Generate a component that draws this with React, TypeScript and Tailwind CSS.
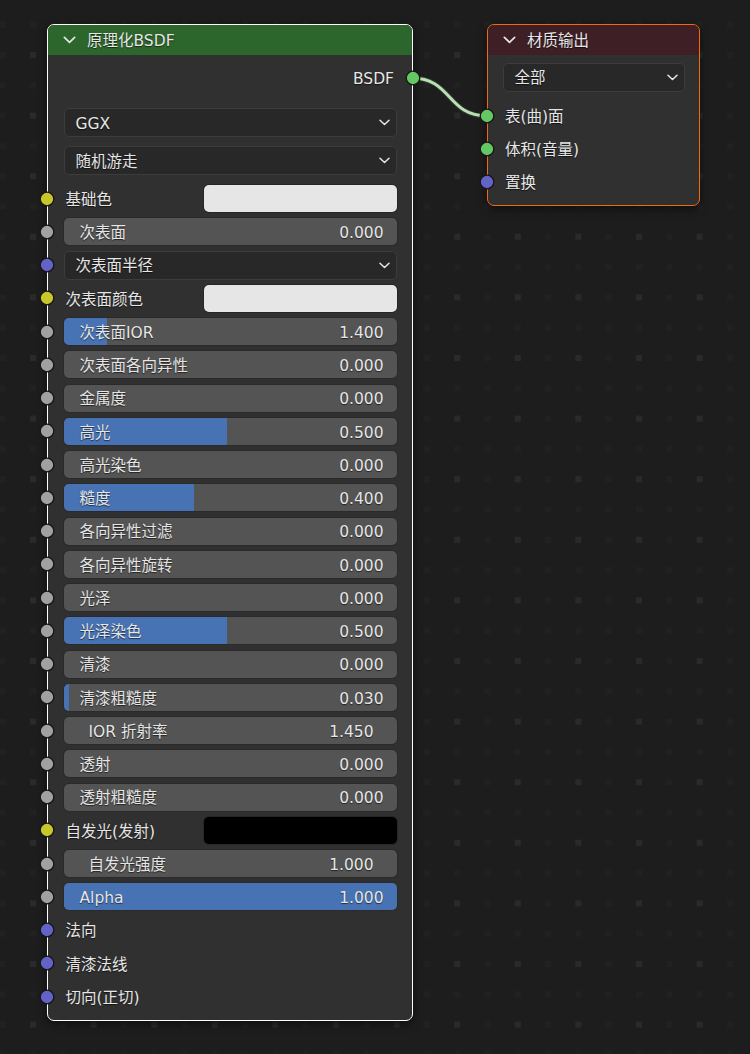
import React from "react";

type Row =
  | { kind: "color"; label: string; socket: string; swatch: string }
  | { kind: "slider"; label: string; socket: string; value: string; fill: string; inset?: boolean }
  | { kind: "menu"; label: string; socket: string }
  | { kind: "label"; label: string; socket: string };

const YELLOW = "#c7c729";
const GRAY = "#a1a1a1";
const PURPLE = "#6363c7";
const GREEN = "#63c763";

const rows: Row[] = [
  { kind: "color", label: "基础色", socket: YELLOW, swatch: "bg-[#e6e6e6]" },
  { kind: "slider", label: "次表面", socket: GRAY, value: "0.000", fill: "w-0" },
  { kind: "menu", label: "次表面半径", socket: PURPLE },
  { kind: "color", label: "次表面颜色", socket: YELLOW, swatch: "bg-[#e6e6e6]" },
  { kind: "slider", label: "次表面IOR", socket: GRAY, value: "1.400", fill: "w-[43px]" },
  { kind: "slider", label: "次表面各向异性", socket: GRAY, value: "0.000", fill: "w-0" },
  { kind: "slider", label: "金属度", socket: GRAY, value: "0.000", fill: "w-0" },
  { kind: "slider", label: "高光", socket: GRAY, value: "0.500", fill: "w-[163px]" },
  { kind: "slider", label: "高光染色", socket: GRAY, value: "0.000", fill: "w-0" },
  { kind: "slider", label: "糙度", socket: GRAY, value: "0.400", fill: "w-[130px]" },
  { kind: "slider", label: "各向异性过滤", socket: GRAY, value: "0.000", fill: "w-0" },
  { kind: "slider", label: "各向异性旋转", socket: GRAY, value: "0.000", fill: "w-0" },
  { kind: "slider", label: "光泽", socket: GRAY, value: "0.000", fill: "w-0" },
  { kind: "slider", label: "光泽染色", socket: GRAY, value: "0.500", fill: "w-[163px]" },
  { kind: "slider", label: "清漆", socket: GRAY, value: "0.000", fill: "w-0" },
  { kind: "slider", label: "清漆粗糙度", socket: GRAY, value: "0.030", fill: "w-[5px]" },
  { kind: "slider", label: "IOR 折射率", socket: GRAY, value: "1.450", fill: "w-0", inset: true },
  { kind: "slider", label: "透射", socket: GRAY, value: "0.000", fill: "w-0" },
  { kind: "slider", label: "透射粗糙度", socket: GRAY, value: "0.000", fill: "w-0" },
  { kind: "color", label: "自发光(发射)", socket: YELLOW, swatch: "bg-black" },
  { kind: "slider", label: "自发光强度", socket: GRAY, value: "1.000", fill: "w-0", inset: true },
  { kind: "slider", label: "Alpha", socket: GRAY, value: "1.000", fill: "w-full" },
  { kind: "label", label: "法向", socket: PURPLE },
  { kind: "label", label: "清漆法线", socket: PURPLE },
  { kind: "label", label: "切向(正切)", socket: PURPLE },
];

const font = "font-['DejaVu_Sans','Noto_Sans_CJK_SC',sans-serif]";
const txt =
  "pt-[4px] text-[15.5px] text-[#e6e6e6] [text-shadow:0_1px_1px_rgba(0,0,0,0.6)] leading-none";

// sockets sit on the node border, half outside the node
const Socket = ({ color, side = "left" }: { color: string; side?: "left" | "right" }) => (
  <svg
    width="16"
    height="16"
    viewBox="0 0 16 16"
    className={`absolute top-[calc(50%-8px)] ${side === "left" ? "left-[-9px]" : "right-[-9px]"}`}
  >
    <circle cx="8" cy="8" r="6.8" fill={color} stroke="#161616" strokeWidth="1.3" />
  </svg>
);

const Chevron = ({ className }: { className?: string }) => (
  <svg width="11" height="7" viewBox="0 0 11 7" className={className}>
    <path d="M1 1.2 L5.5 5.5 L10 1.2" fill="none" stroke="#e6e6e6" strokeWidth="1.5" strokeLinecap="round" strokeLinejoin="round" />
  </svg>
);

const Dropdown = ({ label }: { label: string }) => (
  <div className="w-full h-[29px] flex items-center justify-between rounded-[5px] bg-[#282828] border border-[#3c3c3c] pl-[11px] pr-[6px]">
    <span className={txt}>{label}</span>
    <Chevron />
  </div>
);

const BsdfRow = ({ row }: { row: Row }) => {
  return (
    <div className="relative h-[33.25px] flex items-center px-[15.5px]">
      <Socket color={row.socket} />
      {row.kind === "color" && (
        <div className="flex items-center w-full">
          <span className={`${txt} pl-[2px] w-[140px]`}>{row.label}</span>
          <div className={`flex-1 h-[27px] rounded-[5px] ${row.swatch} shadow-[0_0_0_1px_#262626]`} />
        </div>
      )}
      {row.kind === "menu" && <Dropdown label={row.label} />}
      {row.kind === "label" && <span className={`${txt} pl-[2px]`}>{row.label}</span>}
      {row.kind === "slider" && (
        <div className="relative w-full h-[27px] rounded-[5px] bg-[#545454] overflow-hidden shadow-[0_0_0_1px_#2a2a2a]">
          <div className={`absolute left-0 top-0 bottom-0 bg-[#4772b3] ${row.fill}`} />
          <div
            className={`relative h-full flex items-center justify-between ${
              row.inset ? "pl-[25px] pr-[23px]" : "pl-[16px] pr-[13px]"
            }`}
          >
            <span className={txt}>{row.label}</span>
            <span className={txt}>{row.value}</span>
          </div>
        </div>
      )}
    </div>
  );
};

const Header = ({ title, bg }: { title: string; bg: string }) => (
  <div className={`h-[30px] ${bg} rounded-t-[6px] flex items-center pl-[15px] gap-[11px]`}>
    <Chevron className="w-[13px] h-[8px]" />
    <span className={txt}>{title}</span>
  </div>
);

const Grid = () => (
  <svg className="absolute inset-0" width="750" height="1054">
    <defs>
      <pattern id="dots" x="30" y="52" width="60.6" height="60.6" patternUnits="userSpaceOnUse">
        <rect x="0" y="0" width="6" height="6" fill="#2a2a2a" />
        <rect x="30.3" y="0" width="6" height="6" fill="#212121" />
        <rect x="0" y="30.3" width="6" height="6" fill="#212121" />
        <rect x="30.3" y="30.3" width="6" height="6" fill="#212121" />
      </pattern>
    </defs>
    <rect width="750" height="1054" fill="url(#dots)" />
  </svg>
);

const Link = () => (
  <svg className="absolute inset-0 pointer-events-none" width="750" height="1054">
    <path d="M412 78 C452 78 447 116 487 116" fill="none" stroke="#2b3a29" strokeWidth="5" />
    <path d="M412 78 C452 78 447 116 487 116" fill="none" stroke="#b9dfb2" strokeWidth="3" />
  </svg>
);

export default function App() {
  return (
    <div className={`relative w-[750px] h-[1054px] overflow-hidden bg-[#1d1d1d] ${font}`}>
      <Grid />
      <Link />

      {/* Principled BSDF node */}
      <div className="absolute left-[47px] top-[24px] w-[366px] h-[997px] rounded-[7px] border-[1.5px] border-white bg-[#303030] shadow-[0_3px_8px_rgba(0,0,0,0.5)]">
        <Header title="原理化BSDF" bg="bg-[#2d662d]" />
        <div className="relative h-[32px] mt-[6.5px] flex items-center justify-end pr-[18px]">
          <span className={txt}>BSDF</span>
          <Socket color={GREEN} side="right" />
        </div>
        <div className="mt-[10px] px-[15.5px] flex flex-col">
          <div className="h-[38px] flex items-center">
            <Dropdown label="GGX" />
          </div>
          <div className="h-[38px] flex items-center">
            <Dropdown label="随机游走" />
          </div>
        </div>
        <div className="mt-[2.4px] flex flex-col">
          {rows.map((r) => (
            <BsdfRow key={r.label} row={r} />
          ))}
        </div>
      </div>

      {/* Material Output node */}
      <div className="absolute left-[487px] top-[24px] w-[213px] h-[182px] rounded-[7px] border-[1.5px] border-[#f06a0f] bg-[#303030] shadow-[0_3px_8px_rgba(0,0,0,0.5)]">
        <Header title="材质输出" bg="bg-[#3e1f26]" />
        <div className="px-[14.5px] pt-[7.5px] flex">
          <Dropdown label="全部" />
        </div>
        <div className="mt-[7.4px] flex flex-col">
          {[
            { label: "表(曲)面", color: GREEN },
            { label: "体积(音量)", color: GREEN },
            { label: "置换", color: PURPLE },
          ].map((s) => (
            <div key={s.label} className="relative h-[33.25px] flex items-center pl-[17px]">
              <Socket color={s.color} />
              <span className={txt}>{s.label}</span>
            </div>
          ))}
        </div>
      </div>
    </div>
  );
}
